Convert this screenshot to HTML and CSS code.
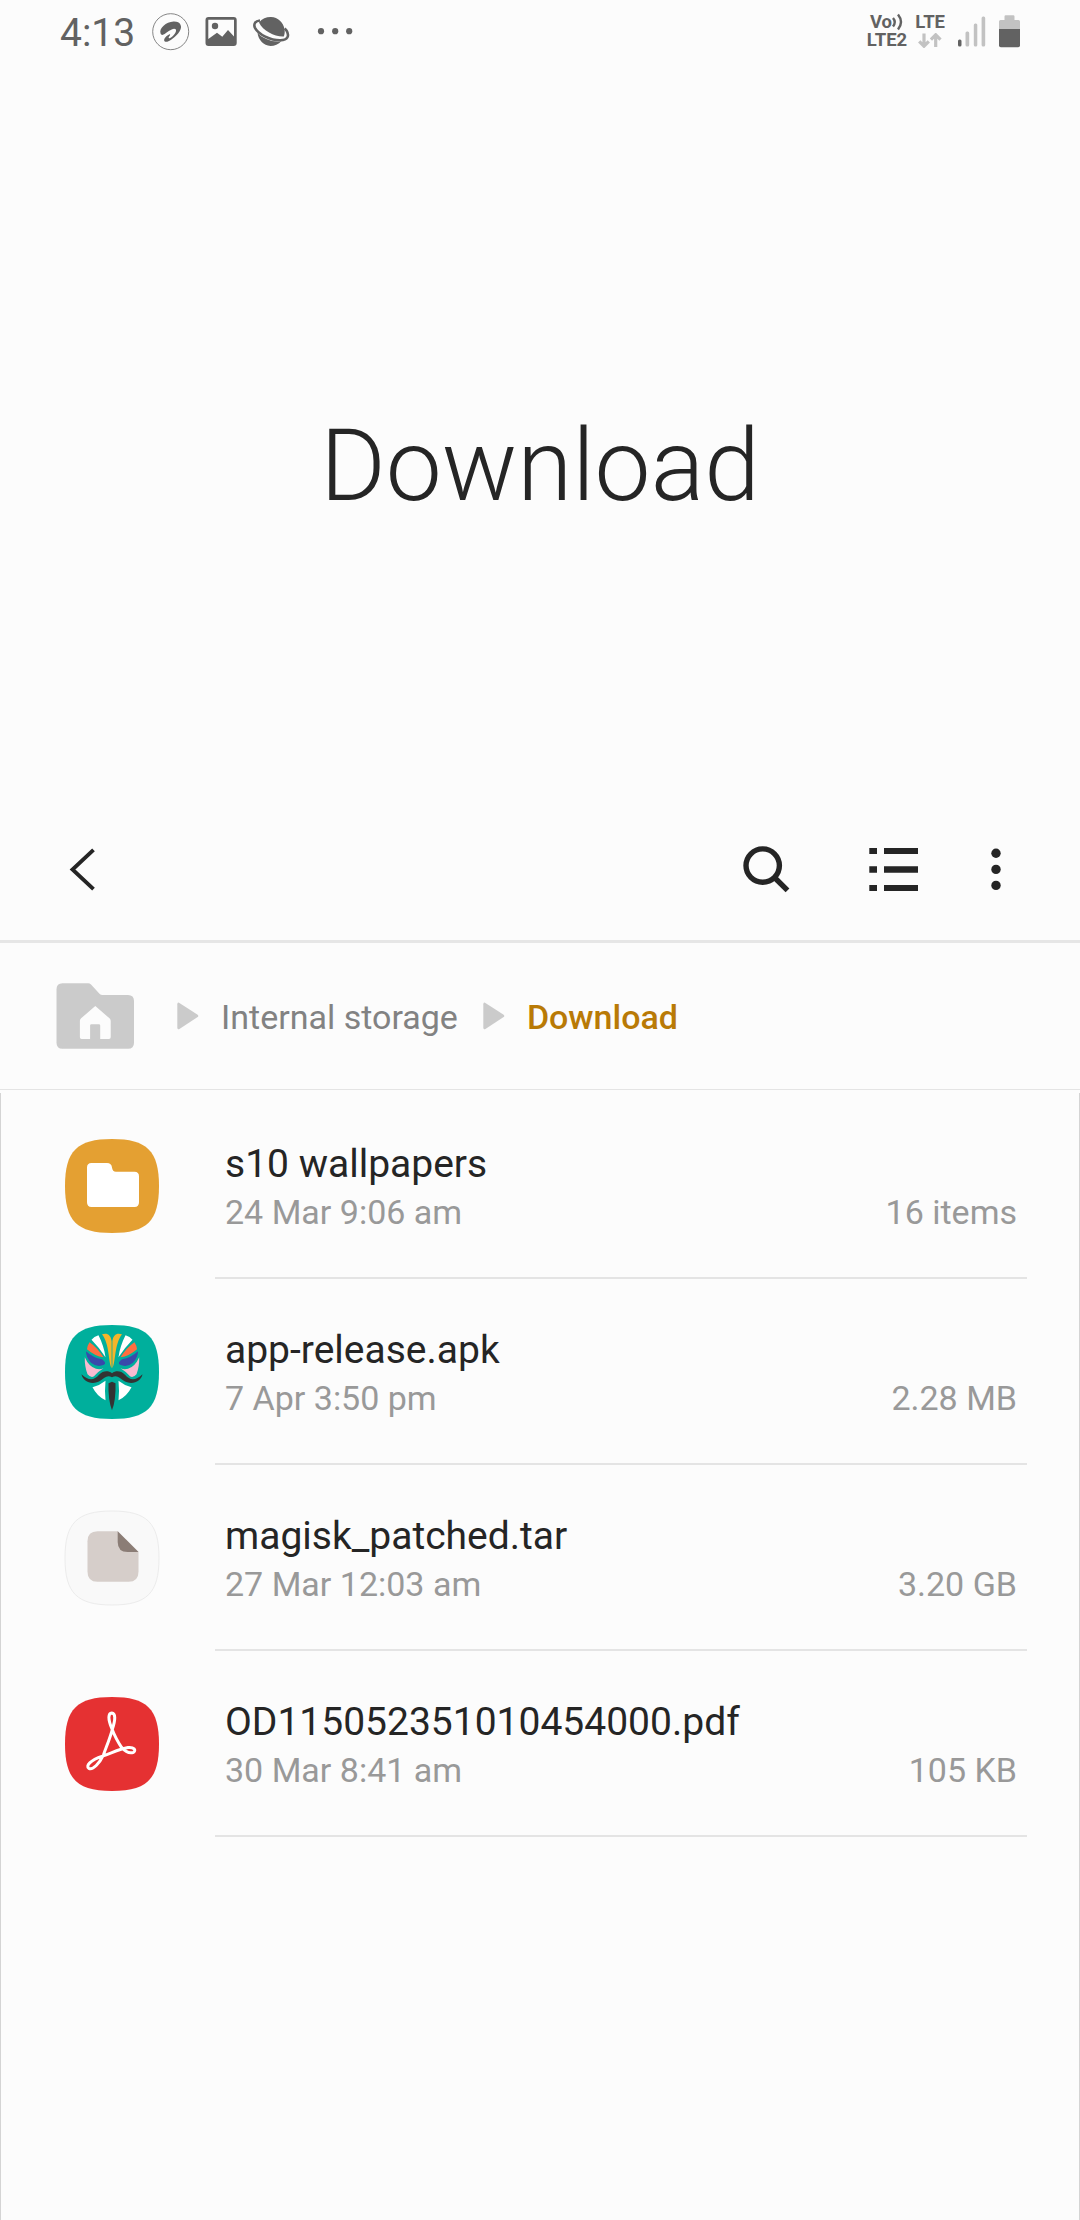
FILE: index.html
```html
<!DOCTYPE html>
<html lang="en">
<head>
<meta charset="utf-8">
<title>My Files</title>
<link rel="stylesheet" href="styles.css">
</head>
<body>
<header class="status">
  <span class="clock">4:13</span>
  <svg class="status-notes" width="220" height="64" viewBox="145 0 220 64">
    <circle cx="170.7" cy="31.7" r="18" fill="none" stroke="#777" stroke-width="0.9"/>
    <path d="M160.500 33.200C159 28.500 166 22 173.500 21.600C180.500 21.300 183 26.500 179.500 31.500C176 37 168.500 42.500 165.300 41.800C162.800 41 164.500 36.500 169.500 34.300C170.500 34 170.200 35.300 169.700 35.800C168 37.300 168.500 38.700 170.200 38C173.500 36.300 177.300 31.500 175.700 29.300C173.500 26.800 167 32.300 163.500 34.600C162 35.400 161 34.600 160.500 33.200Z" fill="#626262"/>
    <path fill-rule="evenodd" d="M208.500 17h25.200a3 3 0 0 1 3 3v23a3 3 0 0 1-3 3h-25.200a3 3 0 0 1-3-3v-23a3 3 0 0 1 3-3zM208.300 19.700v19.300l8.700-6.300 5.300 4 5.700-6.700 6 6.500v-16.800z" fill="#626262"/>
    <circle cx="215" cy="26" r="3.200" fill="#626262"/>
    <path d="M259 22.500C262 18.500 267 16.800 271 17C278 17.200 283.500 22.500 284.500 29C285 32 284.700 34 283.800 36.500C275 37 263 31 259 22.500Z" fill="#626262"/>
    <path d="M257.500 33C263 39 274 43 281.500 41C278.500 44.500 274.500 46 270.500 46C263.500 45.500 258.500 40 257.500 33Z" fill="#626262"/>
    <path d="M260 20.500C255 21 253.500 24 254.800 27.500C258 34.500 271 40.500 280.500 40.300C287.500 40 289.800 36 286.500 30.500C286 29.600 285.300 29 284.600 28.500" fill="none" stroke="#626262" stroke-width="2.600"/>
    <circle cx="321" cy="31.200" r="3.100" fill="#626262"/><circle cx="335.200" cy="31.200" r="3.100" fill="#626262"/><circle cx="349.200" cy="31.200" r="3.100" fill="#626262"/>
  </svg>
  <div class="sims">
    <div class="volte"><span class="vo">Vo<svg width="12" height="18" viewBox="0 0 12 18"><path d="M1 5q3.500 4 0 8.500M6 1.500q6 7.500 0 15" fill="none" stroke="#626262" stroke-width="2.400"/></svg></span><span>LTE2</span></div>
    <div class="lte"><span>LTE</span><svg width="24" height="15" viewBox="918 33 24 15"><path d="M924 33.500V46M919.200 41.300L924 46.200L928.800 41.300M935.700 47V35M930.900 39.700L935.700 34.800L940.500 39.700" fill="none" stroke="#c2c2c2" stroke-width="3.200"/></svg></div>
  </div>
  <svg class="signal" width="66" height="64" viewBox="956 0 66 64">
    <rect x="958" y="39.500" width="3.500" height="7" rx="1.500" fill="#626262"/>
    <g fill="#c2c2c2"><rect x="965.500" y="31.500" width="3.700" height="15" rx="1.500"/><rect x="973.800" y="23.500" width="3.500" height="23" rx="1.500"/><rect x="981.600" y="16.500" width="3.600" height="30" rx="1.500"/>
    <path d="M1004.500 20v-3.500q0-1.300 1.300-1.300h7.400q1.300 0 1.300 1.300v3.500h4q1.500 0 1.500 1.500v8h-21v-8q0-1.500 1.500-1.500z"/></g>
    <path d="M999 29h21v16.500q0 1.800-1.800 1.800h-17.400q-1.800 0-1.800-1.800z" fill="#626262"/>
  </svg>
</header>
<h1 class="title">Download</h1>
<nav class="toolbar">
  <svg class="back" width="30" height="48" viewBox="68 846 30 48"><path d="M93.500 849.800L72.500 869.500L93.500 889.200" fill="none" stroke="#252525" stroke-width="3.900"/></svg>
  <svg width="50" height="50" viewBox="740 844 50 50"><circle cx="761.700" cy="865.600" r="16.700" fill="none" stroke="#252525" stroke-width="5.400"/><path d="M774 878L786.500 890.300" stroke="#252525" stroke-width="5.400"/></svg>
  <svg class="list-icon" width="50" height="50" viewBox="868 845 50 50"><path d="M868.300 848h7.700v6h-7.700zM883 848h34v6h-34zM868.300 866.300h7.700v6.400h-7.700zM883 866.300h34v6.400h-34zM868.300 885h7.700v6h-7.700zM883 885h34v6h-34z" fill="#252525"/></svg>
  <svg class="more" width="12" height="50" viewBox="989.500 845 12 50"><g fill="#252525"><circle cx="995.500" cy="853.300" r="4.700"/><circle cx="995.500" cy="869.400" r="4.700"/><circle cx="995.500" cy="885.400" r="4.700"/></g></svg>
</nav>
<nav class="crumbs">
  <svg width="79" height="66" viewBox="56 983 79 66"><path d="M62.500 983.300h25.500q1.800 0 3 1.200l8.500 9.200q1.200 1.300 3 1.300h25.500q6 0 6 6v41.800q0 6-6 6h-65.500q-6 0-6-6v-53.500q0-6 6-6z" fill="#cbcbcb"/><path d="M95.300 1006l14.200 12.300q1.200 1 1.200 2.500v16.500q0 1.700-1.700 1.700h-8.800v-13.500q0-1.300-1.300-1.300h-7.500q-1.300 0-1.300 1.300v13.500h-8.500q-1.700 0-1.700-1.700v-16.500q0-1.500 1.200-2.500z" fill="#fcfcfc"/></svg>
  <svg class="arrow" width="22" height="28" viewBox="0 0 22 28"><path d="M.300 2.300Q.300-.400 2.800 1.200L20.300 12.500Q22.300 13.900 20.300 15.300L2.800 26.800Q.300 28.300.300 25.600z" fill="#cbcbcb"/></svg>
  <span class="crumb">Internal storage</span>
  <svg class="arrow arrow-2" width="22" height="28" viewBox="0 0 22 28"><path d="M.300 2.300Q.300-.400 2.800 1.200L20.300 12.500Q22.300 13.900 20.300 15.300L2.800 26.800Q.300 28.300.300 25.600z" fill="#cbcbcb"/></svg>
  <span class="crumb current">Download</span>
</nav>
<main class="files">
  <article class="file">
    <svg class="icon" width="96" height="96" viewBox="-1 -1 96 96"><path d="M47 0C82 0 94 12 94 47S82 94 47 94S0 82 0 47S12 0 47 0Z" fill="#e4a032"/><path d="M26.500 24h15.500q4.500 0 5 4.500t4.500 4.200h18q4.500 0 4.500 4.500v26q0 4.800-4.500 4.800h-43q-4.500 0-4.500-4.800v-34.700q0-4.500 4.500-4.500z" fill="#fff"/></svg>
    <div class="info"><h2>s10 wallpapers</h2><div class="meta"><span>24 Mar 9:06 am</span><span>16 items</span></div></div>
  </article>
  <article class="file">
    <svg class="icon" width="96" height="96" viewBox="10 9.700 96 96">
      <path d="M58 10.700C93 10.700 105 22.700 105 57.700S93 104.700 58 104.700S11 92.700 11 57.700S23 10.700 58 10.700Z" fill="#00af9c"/>
      <g id="half">
        <path d="M48 20C53 18 57 20.500 57.600 27V54C54 47 56 31 48 20Z" fill="#f5b52a"/>
        <path d="M37.500 25.500Q40 22 44.500 21C48 28 50.500 35 51.500 43Q45 33 37.500 25.500Z" fill="#fff"/>
        <path d="M35.500 28Q43 33 49.500 43Q41 42 33 35Q33.500 31 35.500 28Z" fill="#ff6e40"/>
        <path d="M32 37Q39 43.500 48 45Q53 48.500 50 50.500Q43 53.500 37 48.500Q32 43 32 37Z" fill="#3949ab"/>
        <path d="M30.800 43Q35 52.500 42 54.500Q46 55.500 49.500 54Q43 58 40 62Q37 64 33.500 60Q30.500 52 30.800 43Z" fill="#f8bbd0"/>
        <path d="M27.500 60C35 67 40 66 45 60.500C49 56.500 54 56 58 59V63C53 60 50 64 47 66C39 71.500 29 68 27.500 60Z" fill="#333"/>
        <path d="M38.500 73Q46 71 51.500 66.500Q50.500 77 51.500 86Q43 82 38.500 73Z" fill="#fff"/>
      </g>
      <use href="#half" transform="translate(116 0) scale(-1 1)"/>
      <path d="M58 67.500L61.500 69Q62 86 58 96Q54 86 54.500 69Z" fill="#333"/>
    </svg>
    <div class="info"><h2>app-release.apk</h2><div class="meta"><span>7 Apr 3:50 pm</span><span>2.28 MB</span></div></div>
  </article>
  <article class="file">
    <svg class="icon" width="96" height="96" viewBox="10 9.700 96 96"><path d="M58 10.700C93 10.700 105 22.700 105 57.700S93 104.700 58 104.700S11 92.700 11 57.700S23 10.700 58 10.700Z" fill="#f9f9f9" stroke="#ececec"/><path d="M43.500 31h20.200L84.500 51.700V71.500q0 10-10 10h-31q-10 0-10-10v-30.500q0-10 10-10z" fill="#d6ceca"/><path d="M63.700 31L84.500 51.700H73.700q-10 0-10-10z" fill="#8b7d76"/></svg>
    <div class="info"><h2>magisk_patched.tar</h2><div class="meta"><span>27 Mar 12:03 am</span><span>3.20 GB</span></div></div>
  </article>
  <article class="file">
    <svg class="icon" width="96" height="96" viewBox="10 9.700 96 96"><path d="M58 10.700C93 10.700 105 22.700 105 57.700S93 104.700 58 104.700S11 92.700 11 57.700S23 10.700 58 10.700Z" fill="#e53132"/><path d="M57.500 41.500C54 33 54 27 57.800 26.700C61.700 27 61.500 33 58.500 42.500C56 52 52.500 60 49.500 68.500C45.500 77 39 84 34.800 82C31.500 79.500 36 74 48.500 69.800C58 66.500 66 62.500 74 61.200C80 60.500 82.500 64 79.500 66C75.500 67.500 71 65 67.500 61C63 54.500 60 48 57.500 41.500Z" fill="none" stroke="#fff" stroke-width="3"/></svg>
    <div class="info"><h2>OD115052351010454000.pdf</h2><div class="meta"><span>30 Mar 8:41 am</span><span>105 KB</span></div></div>
  </article>
</main>
</body>
</html>
```
FILE: styles.css
```css
* { box-sizing: border-box; }
body {
  margin: 0;
  width: 1080px;
  height: 2220px;
  display: flex;
  flex-direction: column;
  background: #fcfcfc;
  color: #252525;
  font-family: Roboto, sans-serif;
  overflow: hidden;
}
svg { display: block; flex: none; }
.status {
  height: 64px;
  display: flex;
  padding: 0 58px 0 60px;
  color: #626262;
}
.clock { width: 85px; font-size: 39px; line-height: 67px; }
.sims {
  display: flex;
  gap: 8px;
  margin-left: auto;
  margin-right: 11px;
  padding-top: 13px;
  font-size: 18.5px;
  line-height: 18px;
  font-weight: 700;
}
.volte, .lte { display: flex; flex-direction: column; align-items: center; }
.vo { display: flex; }
.lte { gap: 2px; }
.title {
  height: 736px;
  margin: 0;
  padding-top: 342px;
  font-size: 100px;
  line-height: 120px;
  font-weight: 300;
  text-align: center;
}
.toolbar {
  height: 143px;
  display: flex;
  padding: 44px 78px 0 68px;
  border-bottom: 3px solid #e6e6e6;
}
.back { margin: 2px auto 0 0; }
.list-icon { margin: 1px 0 0 78px; }
.more { margin: 1px 0 0 71.5px; }
.crumbs {
  height: 147px;
  display: flex;
  align-items: flex-start;
  padding: 40px 0 0 56px;
  border-bottom: 1px solid #e4e4e4;
}
.arrow { margin: 19px 0 0 42px; }
.arrow-2 { margin-left: 25px; }
.crumb {
  margin: 11px 0 0 22px;
  font-size: 34px;
  line-height: 46px;
  color: #828282;
}
.current { color: #b97a06; font-weight: 500; }
.files {
  flex: 1;
  margin-top: 3px;
  border: solid #d4d4d4;
  border-width: 0 1px;
}
.file { height: 186px; display: flex; padding: 0 52px 0 63px; }
.icon { margin: 44.500px 55px 0 0; }
.info {
  flex: 1;
  padding: 48px 10px 0 10px;
  border-bottom: 2px solid #e4e4e4;
}
.info h2 { margin: 0 0 2px; font-size: 39px; line-height: 46px; font-weight: 400; }
.meta {
  display: flex;
  justify-content: space-between;
  font-size: 34px;
  line-height: 46px;
  color: #999;
}
```
